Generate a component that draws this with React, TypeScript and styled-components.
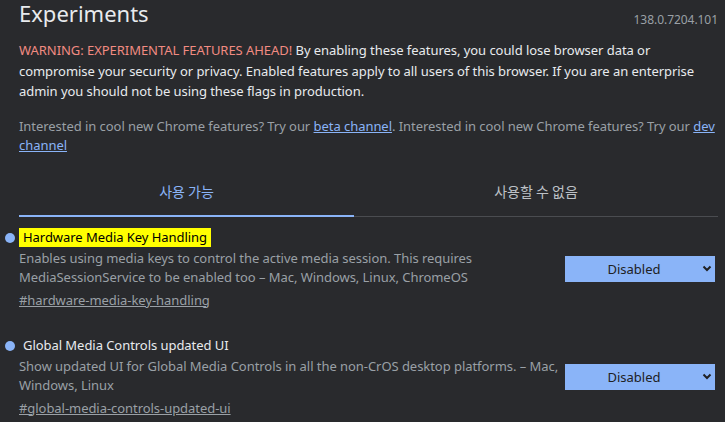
import styled, { createGlobalStyle } from 'styled-components'

const GlobalStyle = createGlobalStyle`
    html, body {
        margin: 0;
        padding: 0;
        background: #292a2d;
    }
    body {
        font-family: "Noto Sans", "Noto Sans CJK KR", sans-serif;
        font-size: 13px;
        letter-spacing: -0.05px;
        color: #e8eaed;
    }
`

const StyledPage = styled.div`
    width: 725px;
    height: 422px;
    overflow: hidden;
    box-sizing: border-box;
    padding: 0 6px 0 19px;
    background: #292a2d;
`
const StyledHeader = styled.div`
    display: flex;
    align-items: flex-start;
    justify-content: space-between;
    height: 36px;
`
const StyledTitle = styled.h1`
    margin: 0;
    font-size: 22px;
    font-weight: 400;
    line-height: 26px;
    letter-spacing: 0;
    color: #e8eaed;
`
const StyledVersion = styled.span`
    margin: 11px 1px 0 0;
    font-size: 12px;
    color: #9aa0a6;
`
const StyledWarning = styled.p`
    margin: 4px 0 0;
    line-height: 20.5px;
    color: #e8eaed;
`
const StyledWarningLabel = styled.span`
    color: #f28b82;
`
const StyledPromo = styled.p`
    margin: 15px 0 0;
    line-height: 19px;
    color: #9aa0a6;
`
const StyledLink = styled.a<{ $muted?: boolean }>`
    color: ${props => props.$muted ? '#9aa0a6' : '#8ab4f8'};
    text-decoration: underline;
`
const StyledTabs = styled.div`
    display: flex;
    margin: 21px 1px 0 0;
    border-bottom: 1px solid #4a4c50;
`
const StyledTab = styled.div<{ $active?: boolean }>`
    flex: 1 1 auto;
    height: 41px;
    display: flex;
    align-items: flex-start;
    justify-content: center;
    padding-top: 5px;
    box-sizing: border-box;
    font-family: "Noto Sans CJK KR", sans-serif;
    font-size: 14px;
    letter-spacing: 0;
    color: ${props => props.$active ? '#8ab4f8' : '#bdc1c6'};
    border-bottom: 2px solid ${props => props.$active ? '#8ab4f8' : 'transparent'};
    margin-bottom: -1px;
`
const StyledExperimentList = styled.div`
    display: flex;
    flex-direction: column;
    gap: 26px;
    margin-top: 11px;
`
const StyledExperiment = styled.div`
    display: flex;
    align-items: center;
    justify-content: space-between;
`
const StyledExperimentText = styled.div`
    max-width: 540px;
    display: flex;
    flex-direction: column;
`
const StyledExperimentName = styled.div<{ $highlight?: boolean }>`
    position: relative;
    align-self: flex-start;
    padding: 0 4px;
    line-height: 19px;
    color: ${props => props.$highlight ? '#000' : '#e8eaed'};
    background: ${props => props.$highlight ? '#ffff00' : 'transparent'};

    &::before {
        content: "";
        position: absolute;
        left: -14px;
        top: 5px;
        width: 10px;
        height: 10px;
        border-radius: 50%;
        background: #8ab4f8;
    }
`
const StyledExperimentDesc = styled.p`
    margin: 2px 0 0;
    line-height: 19.5px;
    color: #9aa0a6;
`
const StyledExperimentLink = styled.div`
    margin-top: 2px;
    line-height: 20px;
`
const StyledSelectWrap = styled.div`
    position: relative;
    flex-shrink: 0;
    margin-right: 4px;
`
const StyledSelect = styled.select`
    appearance: none;
    width: 150px;
    height: 26px;
    border: none;
    border-radius: 0;
    padding: 0 12px 0 0;
    background: #8ab4f8;
    color: #202124;
    font-family: "Noto Sans", sans-serif;
    font-size: 13px;
    text-align: center;
    text-align-last: center;
`
const StyledChevron = styled.svg`
    position: absolute;
    right: 3px;
    top: 9px;
    pointer-events: none;
`

type ExperimentProps = {
    name: string,
    description: string,
    hash: string,
    highlight?: boolean
}

const Experiment = ({ name, description, hash, highlight }: ExperimentProps) => {
    return (
        <StyledExperiment>
            <StyledExperimentText>
                <StyledExperimentName $highlight={highlight}>{name}</StyledExperimentName>
                <StyledExperimentDesc>{description}</StyledExperimentDesc>
                <StyledExperimentLink>
                    <StyledLink $muted href="#">{hash}</StyledLink>
                </StyledExperimentLink>
            </StyledExperimentText>
            <StyledSelectWrap>
                <StyledSelect defaultValue="disabled">
                    <option value="default">Default</option>
                    <option value="enabled">Enabled</option>
                    <option value="disabled">Disabled</option>
                </StyledSelect>
                <StyledChevron width="10" height="8" viewBox="0 0 10 8">
                    <path d="M1.5 1.5 L5 5 L8.5 1.5" fill="none" stroke="#202124" strokeWidth="2" />
                </StyledChevron>
            </StyledSelectWrap>
        </StyledExperiment>
    )
}

export default function App() {
    return (
        <StyledPage>
            <GlobalStyle />
            <StyledHeader>
                <StyledTitle>Experiments</StyledTitle>
                <StyledVersion>138.0.7204.101</StyledVersion>
            </StyledHeader>
            <StyledWarning>
                <StyledWarningLabel>WARNING: EXPERIMENTAL FEATURES AHEAD!</StyledWarningLabel> By enabling these features, you could lose browser data or compromise your security or privacy. Enabled features apply to all users of this browser. If you are an enterprise admin you should not be using these flags in production.
            </StyledWarning>
            <StyledPromo>
                Interested in cool new Chrome features? Try our <StyledLink href="#">beta channel</StyledLink>. Interested in cool new Chrome features? Try our <StyledLink href="#">dev channel</StyledLink>
            </StyledPromo>
            <StyledTabs>
                <StyledTab $active>사용 가능</StyledTab>
                <StyledTab>사용할 수 없음</StyledTab>
            </StyledTabs>
            <StyledExperimentList>
                <Experiment
                    highlight
                    name="Hardware Media Key Handling"
                    description="Enables using media keys to control the active media session. This requires MediaSessionService to be enabled too – Mac, Windows, Linux, ChromeOS"
                    hash="#hardware-media-key-handling"
                />
                <Experiment
                    name="Global Media Controls updated UI"
                    description="Show updated UI for Global Media Controls in all the non-CrOS desktop platforms. – Mac, Windows, Linux"
                    hash="#global-media-controls-updated-ui"
                />
            </StyledExperimentList>
        </StyledPage>
    )
}
